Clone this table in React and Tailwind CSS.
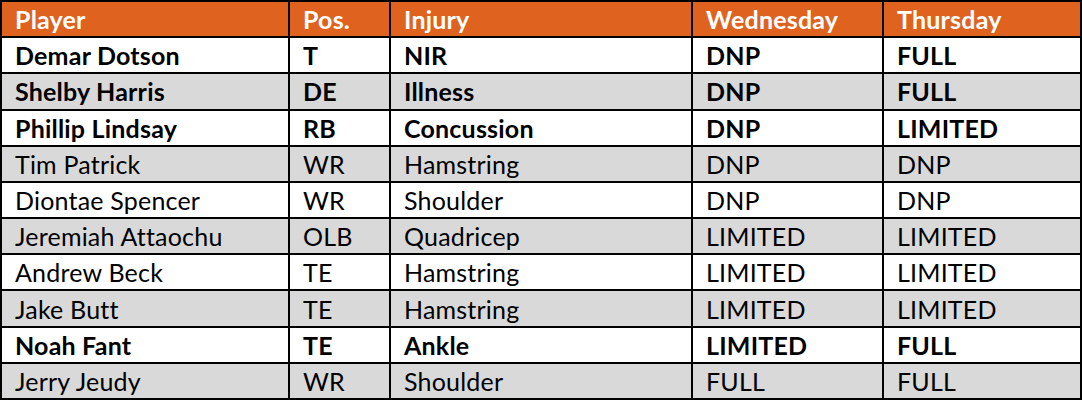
const rows = [
  ['Demar Dotson', 'T', 'NIR', 'DNP', 'FULL', true],
  ['Shelby Harris', 'DE', 'Illness', 'DNP', 'FULL', true],
  ['Phillip Lindsay', 'RB', 'Concussion', 'DNP', 'LIMITED', true],
  ['Tim Patrick', 'WR', 'Hamstring', 'DNP', 'DNP', false],
  ['Diontae Spencer', 'WR', 'Shoulder', 'DNP', 'DNP', false],
  ['Jeremiah Attaochu', 'OLB', 'Quadricep', 'LIMITED', 'LIMITED', false],
  ['Andrew Beck', 'TE', 'Hamstring', 'LIMITED', 'LIMITED', false],
  ['Jake Butt', 'TE', 'Hamstring', 'LIMITED', 'LIMITED', false],
  ['Noah Fant', 'TE', 'Ankle', 'LIMITED', 'FULL', true],
  ['Jerry Jeudy', 'WR', 'Shoulder', 'FULL', 'FULL', false],
]

const headers = ['Player', 'Pos.', 'Injury', 'Wednesday', 'Thursday']

export default function App() {
  return (
    <div className="w-[1082px] h-[402px] bg-white">
      <div
        className="grid h-[400px] gap-[2px] p-[2px] bg-black grid-cols-[286px_99px_300px_189px_196px] grid-rows-11 text-[25px] tracking-[0.2px] leading-none text-black"
        style={{ fontFamily: 'Lato, "Open Sans", sans-serif' }}
      >
        {headers.map((h) => (
          <div key={h} className="flex items-center pl-[13px] pt-[1px] bg-[#e0621f] text-white font-bold">
            {h}
          </div>
        ))}
        {rows.map((r, i) =>
          r.slice(0, 5).map((cell, j) => (
            <div
              key={i + '-' + j}
              className={
                'flex items-center pl-[13px] pt-[1px] ' +
                (i % 2 === 1 ? 'bg-[#d9d9d9] ' : 'bg-white ') +
                (r[5] ? 'font-bold' : 'font-normal')
              }
            >
              {cell}
            </div>
          ))
        )}
      </div>
    </div>
  )
}
